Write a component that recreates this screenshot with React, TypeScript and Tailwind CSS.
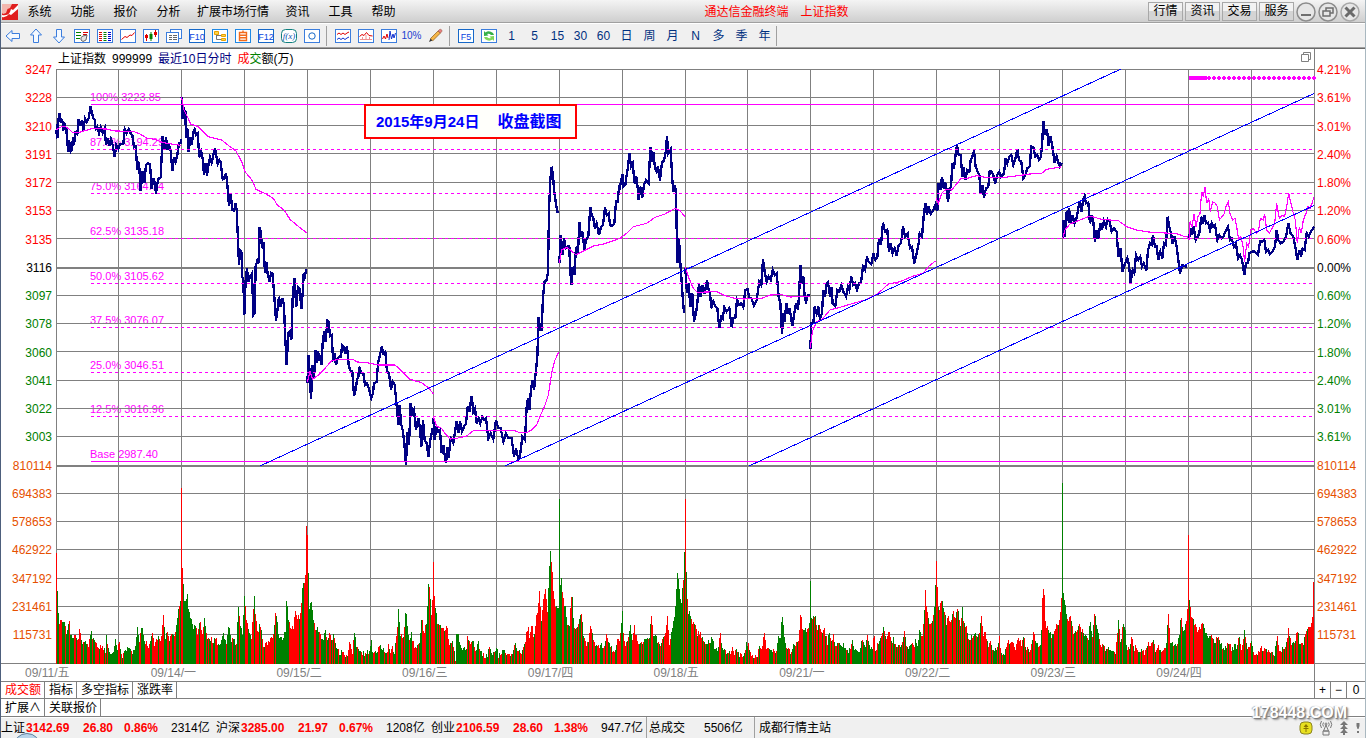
import React from "react";

/* ---------- market data ---------- */

const LEFT_AXIS = ["3247", "3228", "3210", "3191", "3172", "3153", "3135", "3116", "3097", "3078", "3060", "3041", "3022", "3003"];
const RIGHT_AXIS = ["4.21%", "3.61%", "3.01%", "2.40%", "1.80%", "1.20%", "0.60%", "0.00%", "0.60%", "1.20%", "1.80%", "2.40%", "3.01%", "3.61%"];
const VOLUME_AXIS = ["810114", "694383", "578653", "462922", "347192", "231461", "115731"];
const DATES = ["09/11/五", "09/14/一", "09/15/二", "09/16/三", "09/17/四", "09/18/五", "09/21/一", "09/22/二", "09/23/三", "09/24/四"];

const H_LINES = [69, 97, 125, 153, 182, 210, 238, 295, 323, 351, 380, 408, 436, 493, 521, 549, 578, 606, 634];
const V_LINES = [56, 118, 181, 244, 307, 370, 433, 496, 559, 622, 685, 747, 810, 873, 936, 999, 1062, 1125, 1188, 1251];

const LEVELS = [
  { y: 104, text: "100% 3223.85", solid: true },
  { y: 149, text: "87.5% 3194.29", solid: false },
  { y: 193, text: "75.0% 3164.74", solid: false },
  { y: 238, text: "62.5% 3135.18", solid: false },
  { y: 283, text: "50.0% 3105.62", solid: false },
  { y: 327, text: "37.5% 3076.07", solid: false },
  { y: 372, text: "25.0% 3046.51", solid: false },
  { y: 416, text: "12.5% 3016.96", solid: false },
  { y: 461, text: "Base 2987.40", solid: true },
];

type Trace = { at: string; price: string[]; average: string[] };

/* Coordinates are thirds of a pixel, relative to each block's origin. */
const TRACES: Trace[] = [
  {
    at: "translate(0 50) scale(0.33333)",
    price: [
      "168,240 173,265 173,222 178,192 180,192 182,215 187,212 190,235 194,225 197,240 200,232 204,307 207,270 212,305 216,300 219,262 222,285 226,248 232,252 236,207 241,228 246,210 250,243 255,205 260,215 266,205 272,168 276,190 280,205 284,208 287,237 292,230 297,250 302,232 308,248 314,235 318,285 323,265 328,288 333,268 338,285 344,320 349,285 355,298 360,283 370,283 374,238 380,250 386,238 392,250 397,255 402,292 407,290 412,360 417,335 422,422 428,362 433,398 438,345 443,340 450,342 455,418 460,385 465,400 468,432 474,388 482,382 488,258 494,300 498,262 503,300 506,280 512,302 517,362 522,322 527,335 532,315 537,280 543,280 543,266",
      "545,142 547,208 550,170 552,205 556,180 558,265 562,235 566,305 571,262 575,285 580,245 584,238 588,255 593,250 598,322 604,305 608,325 612,375 617,340 621,378 626,340 630,322 635,338 640,315 645,295 649,318 653,342 658,330 662,335 668,388 673,385 678,370 682,405 687,468 692,432 697,480 702,482 707,460 710,480 714,570 717,645 720,600 724,605 727,680 730,690 733,795 737,690 741,655 745,695 750,680 756,670 760,795 764,790 767,650 772,632 776,640 779,532 783,550 786,595 790,575 795,670 799,635 803,672 809,695 813,668 817,670 822,725 828,812 833,775 837,740 842,770 847,745 852,765 855,850 860,945 865,850 869,845 874,870 878,745 883,685 889,770 894,710 899,715 904,778 908,730 911,675 915,680 918,658",
    ],
    average: [
      "168,240 180,232 192,228 205,235 218,248 235,248 255,242 275,236 320,237 345,243 400,244 420,252 440,264 465,268 490,278 515,282 543,286",
      "545,142 552,180 562,200 572,222 595,230 625,260 665,270 690,290 708,303 725,335 735,365 758,393 768,418 800,433 820,445 832,465 852,480 870,508 890,525 905,537 920,548",
    ],
  },
  {
    at: "translate(300 90) scale(0.33333)",
    price: [
      "22,880 26,795 30,870 33,928 38,825 42,865 47,780 51,820 55,790 60,800 64,825 69,745 73,725 77,755 82,692 86,695 90,738 95,735 99,805 104,795 108,825 113,805 118,800 123,800 126,765 131,770 135,785 141,768 146,825 150,840 157,845 162,918 167,900 171,870 175,860 178,830 184,850 190,850 195,885 200,880 205,890 209,905 214,925 219,910 222,880 230,875 234,820 239,800 245,770 250,790 256,785 261,845 267,850 273,900 278,875 284,885 289,935 295,1005 299,945 303,1000 308,1020 313,1060 318,1125 322,1025 327,1065 332,940 337,970 342,960 348,1020 355,985 360,1015 364,1070 369,990 374,1050 380,1060 385,1100 391,1050 397,1020 400,1025",
      "400,985 404,1050 409,1010 415,1025 420,1020 425,1090 430,1065 433,1090 438,1120 443,1070 446,1105 452,1045 460,1060 465,1025 470,995 475,1030 480,995 486,1025 492,1010 498,1000 503,950 508,965 515,918 520,965 525,955 530,1000 536,985 541,1000 547,980 553,990 558,985 565,1045 572,1030 580,1048 588,990 595,1015 602,1015 610,1055 618,1030 625,1045 635,1045 642,1100 648,1075 655,1108 660,1098 667,1040 675,1050 680,950 684,925 688,960 692,910 697,870 702,900 707,850 712,800 716,680 720,720 725,720 729,620 734,575 740,570 744,545 747,360 751,270 755,230 759,255 762,300 767,335 772,365 776,367",
      "778,520 782,435 787,495 792,445 797,475 803,470 808,470 810,530 814,585 818,530 823,555 828,470 834,490 838,395 843,440 848,425 853,480 858,450 865,440 871,350 875,375 880,385 885,415 890,400 897,435 903,410 909,405 915,352 920,375 926,370 930,405 936,408 943,400 948,335 953,335 958,285 960,290 967,253 970,290 976,285 980,255 984,230 988,190 993,230 998,220 1004,280 1010,260 1016,330 1021,290 1027,322 1032,285 1038,270 1046,280 1051,172 1055,215 1060,185 1065,235 1070,245 1074,228 1080,272 1086,218 1092,212 1098,180 1101,138 1105,190 1112,178 1117,270 1120,305 1124,285 1128,305 1132,520 1137,445 1141,520 1144,560 1148,620 1152,668",
    ],
    average: [
      "22,875 30,845 38,868 55,855 75,835 95,812 120,808 158,808 172,816 200,818 235,825 285,825 300,838 330,868 365,878 385,893 400,911",
      "400,980 410,1008 425,1015 435,1030 450,1047 470,1045 500,1038 520,1022 640,1021 660,1028 680,1028 695,1020 710,1005 722,975 735,945 745,915 755,850 765,810 776,787",
      "778,520 785,480 800,472 812,480 828,495 850,483 880,468 910,462 940,452 960,445 980,430 1000,410 1040,400 1065,382 1095,372 1125,355 1140,362 1156,382",
    ],
  },
  {
    at: "translate(600 90) scale(0.33333)",
    price: [
      "256,535 261,610 266,580 271,650 277,610 282,695 288,670 292,640 297,580 302,620 308,585 314,610 321,570 326,600 330,610 334,655 340,635 346,650 352,655 358,715 364,680 368,685 373,652 380,665 388,655 395,712 400,685 406,685 411,630 418,645 424,640 430,652 436,600 443,598 448,625 454,625 462,647 470,630 478,575 484,585 489,507 494,545 500,575 506,560 512,570 518,540 524,555 530,550 536,620 541,640 546,732 550,670 554,695 559,640 564,670 569,655 577,708 583,670 588,640 594,660 598,600 601,525 605,580 610,560 614,620 618,635 624,615 631,615",
      "631,778 634,700 640,700 644,650 650,670 655,650 660,688 666,670 670,600 675,620 680,580 684,577 690,620 694,590 698,640 706,648 712,600 718,605 724,585 730,605 738,620 744,590 748,600 754,560 760,585 765,580 771,600 777,580 783,578 789,530 795,540 801,500 806,515 814,522 820,490 826,510 832,500 837,445 843,465 849,398 855,425 862,420 867,485 872,460 878,490 884,475 890,497 896,465 903,460 909,410 915,440 923,430 930,475 936,470 943,520 950,490 956,460 959,430 966,440 971,380 976,340 981,375 986,350 992,372 1000,360 1006,345 1009,360",
    ],
    average: [
      "256,530 265,560 280,595 292,607 350,605 370,615 400,624 430,627 485,625 510,615 545,614 570,621 631,619",
      "631,775 637,725 650,695 665,690 690,660 720,652 760,640 795,630 835,610 865,582 900,575 940,558 970,550 985,530 1006,513",
    ],
  },
  {
    at: "translate(930 60) scale(0.33333)",
    price: [
      "18,450 22,450 26,370 31,390 36,350 41,385 46,368 50,390 54,425 59,385 63,380 67,310 72,325 76,290 81,255 86,285 92,285 97,350 101,320 106,360 112,330 118,335 122,300 127,290 132,272 137,320 143,335 148,345 152,400 157,375 162,412 168,385 175,380 179,335 185,335 190,345 196,370 202,345 208,335 213,350 222,340 227,295 232,310 238,290 244,285 250,315 255,300 262,268 267,300 274,305 280,355 286,345 292,325 299,320 304,260 310,262 316,290 322,285 327,300 333,290 337,240 340,182 345,225 351,208 356,258 362,230 368,265 374,308 380,290 386,310 390,320 395,308",
      "398,535 400,480 404,530 409,460 413,455 417,490 417,445 422,490 428,465 434,490 441,470 448,425 455,455 459,420 464,408 468,430 475,428 480,490 485,465 490,485 495,545 500,510 505,535 511,490 516,510 522,482 528,500 533,478 539,485 545,515 552,505 560,515 565,590 571,565 578,635 585,610 592,595 597,615 602,668 608,630 613,640 618,585 625,600 631,590 636,620 641,610 649,632 654,570 660,550 665,555 669,525 675,560 680,560 685,600 691,575 697,595 702,550 708,555 713,470 718,500 723,520 728,550 734,530 740,560 745,600 750,640 757,615 762,618 771,620",
      "777,540 781,505 786,525 791,500 797,540 803,530 808,520 814,470 818,490 823,465 828,490 834,488 840,510 845,490 850,500 855,495 862,540 868,525 874,535 880,530 888,510 894,500 900,540 905,535 912,560 918,550 924,595 930,585 936,600 943,645 948,610 954,610 958,580 966,575 974,575 984,585 990,545 998,545 1003,540 1008,575 1014,570 1020,582 1028,575 1035,560 1040,510 1045,540 1052,550 1060,545 1068,530 1075,490 1082,520 1090,530 1096,560 1102,600 1108,570 1113,590 1118,565 1124,570 1130,520 1136,530 1143,515 1152,500",
    ],
    average: [
      "18,415 25,430 35,400 48,388 65,390 92,357 115,354 140,347 165,352 225,352 265,347 300,342 335,340 350,328 393,321",
      "398,535 405,510 420,492 445,482 480,468 515,478 565,482 590,500 620,510 655,516 740,521 765,530 775,531",
      "777,540 780,485 786,500 792,462 798,500 804,470 810,460 815,395 820,410 825,382 830,430 836,415 841,455 848,425 856,430 862,440 868,480 876,470 882,462 888,440 895,425 900,460 908,480 915,475 920,500 926,540 932,530 938,550 944,605 950,550 956,560 962,510 970,505 980,520 986,510 991,475 1000,480 1004,462 1010,510 1018,520 1026,505 1034,490 1040,430 1048,475 1056,465 1064,470 1070,440 1076,400 1083,430 1090,460 1096,480 1102,550 1108,500 1114,520 1120,480 1128,460 1134,440 1140,445 1146,430 1152,410",
    ],
  },
];

/* Turnover envelope for each half of the period. */
const VOLUME_A =
  "128,310 130,460 134,515 138,505 145,515 150,540 157,515 160,555 168,550 175,570 180,532 184,565 192,575 200,578 206,530 210,565 216,570 225,585 240,595 241,545 246,597 255,600 262,565 266,600 270,560 274,612 282,605 292,582 298,600 306,592 312,520 316,580 321,515 326,560 332,575 338,585 345,550 350,580 360,545 364,575 370,490 375,560 380,535 384,570 390,540 398,545 402,495 406,465 410,440 414,345 418,440 422,450 424,410 428,480 434,500 438,540 443,515 448,550 453,500 458,550 463,500 468,550 475,560 484,565 488,548 494,578 500,580 507,550 514,580 519,505 524,570 530,560 536,578 541,462 546,520 550,540 555,415 558,505 564,530 570,570 574,485 577,420 580,490 584,540 590,520 598,580 606,570 614,565 620,555 626,475 632,550 640,560 648,540 650,445 655,500 660,530 666,530 670,475 675,495 680,500 685,435 688,390 692,400 695,310 697,228 699,305 702,470 707,455 710,490 716,540 722,530 728,550 734,565 738,540 744,560 748,535 752,570 757,545 762,585 770,605 780,597 785,608 790,605 794,570 800,600 805,530 810,590 820,600 826,608 832,597 838,612 842,560 846,597 855,608 862,575 866,590 876,605 882,582 886,600 890,575 895,605 900,560 905,465 909,550 914,560 917,545 921,465 926,535 930,565 934,540 938,575 944,585 952,580 958,495 962,550 968,515 973,395 978,440 980,500 983,395 987,450 992,500 996,530 1000,520 1004,525 1010,550 1015,520 1019,575 1026,565 1030,580 1034,625 1036,545 1040,540 1044,575 1050,590 1058,590 1062,555 1068,580 1074,570 1080,600 1086,570 1090,600 1100,612 1108,610 1111,575 1115,605 1124,605 1128,575 1132,612 1142,597 1150,600 1156,610 1165,605 1169,570 1174,605 1182,600 1190,590 1195,545 1199,520 1203,560 1208,500 1212,560 1217,505 1222,465 1225,415 1229,510 1235,435 1239,400 1243,490 1246,375 1250,300 1254,360 1258,435 1262,470 1268,465 1270,405 1275,385 1279,440 1284,470 1288,510 1293,525 1297,435 1299,420 1303,520 1310,540 1316,500 1320,485 1326,560 1330,575 1336,570 1340,515 1345,550 1350,575 1358,590 1365,580 1372,585 1377,555 1383,580 1390,590 1396,600 1402,560 1406,565 1410,530 1414,460 1416,545 1420,580 1426,570 1431,515 1436,560 1441,525 1448,575 1455,575 1460,570 1467,550 1474,575 1479,480 1484,545 1490,550 1496,580 1504,570 1512,530 1516,490 1520,575 1526,530 1531,495 1535,440 1539,355 1543,420 1547,460 1552,380 1555,290";
const VOLUME_B =
  "12,300 14,360 17,480 22,478 26,510 32,508 38,545 45,540 52,565 58,580 64,565 68,580 72,550 78,590 86,598 91,545 95,585 102,600 110,612 118,590 124,605 130,590 136,610 145,608 150,580 154,575 160,605 166,612 175,612 182,575 186,600 191,535 196,580 202,600 212,595 220,595 225,540 229,570 232,478 237,550 244,590 254,600 260,580 270,575 275,472 279,540 284,530 290,540 296,500 300,500 304,485 308,490 313,530 317,525 322,550 330,535 336,570 341,540 346,580 350,550 355,582 362,570 368,575 378,590 386,597 392,568 398,597 410,600 417,550 422,595 428,550 433,590 440,590 442,530 446,595 455,560 460,550 465,520 470,565 477,540 483,575 487,560 492,585 500,578 508,575 512,530 516,580 522,585 528,570 535,580 537,560 543,580 547,525 552,560 556,510 560,422 564,480 568,515 574,520 580,485 584,365 586,333 588,445 592,480 595,450 600,455 604,490 608,510 613,490 618,520 623,475 628,495 634,462 640,530 644,465 648,520 654,515 658,560 668,550 676,545 682,550 688,490 692,550 698,545 704,580 708,560 714,590 722,598 729,550 733,600 742,600 748,565 754,580 760,575 766,590 772,560 780,575 785,550 790,590 800,595 807,535 814,575 824,585 827,450 831,402 834,510 840,530 848,555 855,530 862,520 868,495 872,415 877,428 881,480 886,510 892,490 898,540 906,535 913,520 920,540 926,550 932,570 936,505 942,560 947,470 953,535 958,565 965,585 972,590 980,595 988,590 995,600 1002,495 1006,575 1011,515 1017,530 1020,595 1026,590 1032,550 1036,590 1042,582 1050,600 1056,590 1062,605 1070,570 1076,580 1080,565 1086,600 1092,580 1100,600 1110,585 1115,485 1120,570 1126,575 1134,575 1140,550 1144,495 1149,540 1155,520 1158,480 1160,442 1164,450 1168,490 1176,520 1183,545 1192,510 1198,535 1206,565 1213,555 1220,570 1230,555 1236,580 1246,590 1254,575 1262,595 1268,570 1272,595 1277,550 1282,590 1290,535 1296,600 1305,560 1310,610 1320,605 1327,580 1333,595 1340,590 1350,600 1358,605 1364,545 1369,600 1378,590 1384,585 1390,530 1396,580 1404,575 1411,530 1416,580 1424,570 1430,545 1435,520 1441,520 1446,490 1450,397";

/* Opening spikes: x, top, colour. */
const SPIKES: [number, number, "r" | "g"][] = [
  [56, 553, "r"], [181, 488, "r"], [306, 526, "r"], [433, 562, "r"], [559, 499, "g"], [685, 499, "r"],
  [810, 581, "g"], [936, 561, "r"], [1062, 483, "g"], [1188, 535, "r"], [1313, 582, "r"],
];

/* Share of falling (green) minutes up to each x. */
const GREEN_SHARE: [number, number][] = [
  [70, 0.65], [103, 0.3], [132, 0.6], [180, 0.45], [192, 0.85], [215, 0.4], [251, 0.65], [273, 0.4], [290, 0.65], [307, 0.15],
  [323, 0.75], [352, 0.45], [372, 0.7], [392, 0.5], [407, 0.7], [424, 0.4], [440, 0.7], [455, 0.35], [497, 0.6], [523, 0.4],
  [555, 0.1], [572, 0.7], [592, 0.4], [616, 0.65], [634, 0.5], [651, 0.35], [660, 0.75], [671, 0.3], [686, 0.85], [700, 0.35],
  [724, 0.6], [768, 0.3], [794, 0.7], [802, 0.2], [811, 0.8], [829, 0.35], [872, 0.65], [890, 0.35], [920, 0.6], [938, 0.2],
  [964, 0.6], [995, 0.35], [1004, 0.65], [1021, 0.35], [1041, 0.6], [1044, 0.05], [1056, 0.6], [1062, 0.4], [1066, 0.8], [1082, 0.35],
  [1117, 0.65], [1139, 0.5], [1167, 0.4], [1187, 0.6], [1203, 0.3], [1244, 0.65], [1271, 0.35], [1280, 0.6], [1292, 0.4], [1303, 0.7], [1315, 0.1],
];

function hash(n: number) {
  let h = Math.imul(n + 1, 0x9e3779b1);
  h = Math.imul(h ^ (h >>> 15), 0x85ebca6b);
  h = Math.imul(h ^ (h >>> 13), 0xc2b2ae35);
  return ((h ^ (h >>> 16)) >>> 0) / 4294967296;
}

function envelope(source: string, origin: number, scale: number) {
  return source.split(" ").map((pair) => {
    const [x, y] = pair.split(",").map(Number);
    return [origin + x / scale, 450 + y / 3];
  });
}

function buildVolume() {
  const pts = [...envelope(VOLUME_A, 0, 2.2725), ...envelope(VOLUME_B, 680, 2.2857)];
  let red = "";
  let green = "";
  let seg = 0;
  for (let x = 57; x < 1314; x++) {
    while (seg < pts.length - 2 && pts[seg + 1][0] < x) seg++;
    const [x0, y0] = pts[seg];
    const [x1, y1] = pts[seg + 1];
    const t = Math.min(1, Math.max(0, (x - x0) / (x1 - x0 || 1)));
    const top = Math.min(661, Math.round(y0 + (y1 - y0) * t + hash(x) * 6 - 1));
    const share = (GREEN_SHARE.find(([end]) => x <= end) ?? [0, 0.5])[1];
    const bar = `M${x} ${top}h1V664h-1z`;
    if (hash(x + 5000) < share) green += bar;
    else red += bar;
  }
  return { red, green };
}

const VOLUME = buildVolume();

/* ---------- toolbar icons ---------- */

const svgProps = { viewBox: "0 0 16 16", width: 16, height: 16, fill: "none", "aria-hidden": true } as const;

function Boxed({ children, tone = "#3b7ddd" }: { children: React.ReactNode; tone?: string }) {
  return (
    <svg {...svgProps}>
      <rect x="0.5" y="1.5" width="15" height="13" fill="#fff" stroke={tone} />
      {children}
    </svg>
  );
}

function Arrow({ turn }: { turn: number }) {
  return (
    <svg {...svgProps}>
      <path transform={`rotate(${turn} 8 8)`} d="M1 8 7 2.5V5.5H14.5V10.5H7V13.5Z" fill="#f4f9ff" stroke="#3b7ddd" strokeLinejoin="round" />
    </svg>
  );
}

function Letters({ text, tone = "#1668c8" }: { text: string; tone?: string }) {
  return (
    <Boxed tone={tone}>
      <text x="8" y="12" textAnchor="middle" fontSize="9" fill="#0b46e0" fontFamily="Liberation Sans, sans-serif">{text}</text>
    </Boxed>
  );
}

const TOOLS_A: [string, React.ReactNode][] = [
  ["后退", <Arrow turn={0} />],
  ["上一个", <Arrow turn={90} />],
  ["下一个", <Arrow turn={-90} />],
  ["自选报价", <Boxed><path d="M2 4.5h5M2 7.5h5M2 10.5h4" stroke="#008000" /><path d="M9 4.5h5M9 6.5h4" stroke="#d00" /><path d="M7 12q-1-3 2-4l4-1-1 5-3 1.5z" fill="#e4e4e4" stroke="#666" /></Boxed>],
  ["行情列表", <Boxed><path d="M2 4.5h3M2 6.5h3M2 8.5h3M2 10.5h3M2 12.5h3" stroke="#e00000" /><path d="M6.5 4.5h3M6.5 6.5h3M6.5 8.5h3M6.5 10.5h3M6.5 12.5h3" stroke="#008000" /><path d="M11 4.5h3M11 6.5h3M11 8.5h3M11 10.5h3M11 12.5h3" stroke="#0000d0" /></Boxed>],
  ["分时走势", <Boxed><path d="M1.5 11.5 5 8.5l2 1 3-2.5 2 .5 2.5-3" stroke="#e00000" /></Boxed>],
  ["K线图", <Boxed><path d="M3.5 6v7M12.5 2v7" stroke="#e00000" /><path d="M8 4v9" stroke="#008000" /><path d="M2 7h3v3H2zM11 4h3v3h-3z" fill="#e00000" /><path d="M6.5 6h3v5h-3z" fill="#008000" /></Boxed>],
  ["多窗口", <svg {...svgProps}><rect x="4.5" y="1.5" width="11" height="9" fill="#fff" stroke="#3b7ddd" /><rect x="0.5" y="4.5" width="12" height="10" fill="#fff" stroke="#3b7ddd" /><path d="M3 7.5h3M7 7.5h4M3 9.5h3M7 9.5h4M3 11.5h3M7 11.5h4" stroke="#666" /></svg>],
  ["F10资料", <Letters text="F10" />],
  ["板块树", <Boxed tone="#1e88e5"><path d="M4.5 5v6.5H9M4.5 7.5H9" stroke="#777" /><path d="M2.5 3.5h4v3h-4zM9.5 6.5h4v2h-4zM9.5 10.5h4v2h-4z" fill="#ffd54a" stroke="#e8a200" /></Boxed>],
  ["自选股", <Boxed tone="#1e88e5"><path d="M4.5 4.5h7v8h-7zM4.5 7.2h7M4.5 9.8h7M8 2.5v2" stroke="#f26a1b" strokeWidth="1.4" /></Boxed>],
  ["F12交易", <Letters text="F12" />],
  ["公式", <svg {...svgProps}><rect x="0.5" y="1.5" width="15" height="13" rx="4" fill="#fff" stroke="#0f7f7f" /><text x="8" y="11" textAnchor="middle" fontSize="9" fontStyle="italic" fill="#0a50b0" fontFamily="Liberation Serif, serif">f(x)</text></svg>],
  ["选股", <Boxed><circle cx="8" cy="8" r="3.2" stroke="#1668c8" /></Boxed>],
];

const TOOLS_B: [string, React.ReactNode][] = [
  ["叠加走势", <Boxed><path d="M2 6.5 4 5l2 1.5L8 5l2 1.5L12 5l2-1" stroke="#e00000" /><path d="M2 11.5 4 10l2 1.5L8 10l2 1.5L12 10l2-1" stroke="#1030d0" /></Boxed>],
  ["区间统计", <Boxed><path d="M1.5 8.5 4 6.5l2 1 2.5-3 2.5 3 3.5.5" stroke="#e00000" /><path d="M2 11.5h12M4.5 9v2M8 7v4M11.5 9v2" stroke="#f09090" /></Boxed>],
  ["振荡指标", <Boxed><path d="M1.5 11 3 8l1.5 3L6 6l1 4" stroke="#e00000" /><path d="M8 12 9 3l1.5 8L12 6l1 4 1.5-5" stroke="#1030d0" /></Boxed>],
  ["百分比坐标", <span className="text-[10px] text-[#2040d0]">10%</span>],
  ["画线工具", <svg {...svgProps}><path d="M2 14 3.5 10.5 5.5 12.5z" fill="#333" /><path d="M3.5 10.5 11 3l2.5 2L5.8 12.7z" fill="#f5b548" stroke="#8a5a18" strokeWidth="0.7" /><path d="M11 3l1.5-1.5q1.2-.5 2 .3t.3 1.7L13.5 5z" fill="#e98080" stroke="#8a4a38" strokeWidth="0.5" /></svg>],
];

const TOOLS_C: [string, React.ReactNode][] = [
  ["F5切换", <Letters text="F5" />],
  ["刷新", <Boxed><path d="M3 8V3l1.5 1.5Q8 2 12 5l1 2h-3Q8 5 6 6l1.5 1.5z" fill="#35b048" /><path d="M13 8v5l-1.5-1.5Q8 14 4 11L3 9h3q2 2 4 1L8.5 8.5z" fill="#7fd85a" /></Boxed>],
];

const PERIODS = ["1", "5", "15", "30", "60", "日", "周", "月", "N", "多", "季", "年"];

function ToolGroup({ items }: { items: [string, React.ReactNode][] }) {
  return (
    <>
      {items.map(([label, icon]) => (
        <button key={label} type="button" aria-label={label} className="flex h-6 w-[23px] shrink-0 items-center justify-center">
          {icon}
        </button>
      ))}
    </>
  );
}

function ToolSeparator({ className = "" }: { className?: string }) {
  return <span className={`h-5 w-px shrink-0 bg-[#a0a0a0] ${className}`} />;
}

/* ---------- page parts ---------- */

const MENUS = ["系统", "功能", "报价", "分析", "扩展市场行情", "资讯", "工具", "帮助"];

function MenuBar() {
  return (
    <header className="flex h-6 items-center border-b border-white bg-gradient-to-b from-[#f4f4f4] to-[#cdcdcd] pr-[5px] shadow-[inset_0_-1px_0_#a0a0a0]">
      <svg viewBox="0 0 16 16" width="16" height="16" className="ml-px shrink-0" aria-hidden="true">
        <rect width="16" height="16" fill="#e01f1f" />
        <path d="M0 0h10L8 4 5.5 5 4 9 1 10 0 9z" fill="#f3b6ae" />
        <path d="M0 11q6 1 8-3l1-3 2 1 5-5v4L9 11l-2-1q-3 4-7 3z" fill="#fff" />
      </svg>
      <nav className="flex">
        {MENUS.map((m) => (
          <button key={m} type="button" className="min-w-[43px] shrink-0 px-[7px] whitespace-nowrap">{m}</button>
        ))}
      </nav>
      <h1 className="flex flex-1 justify-center gap-3 whitespace-nowrap text-[#f00]">
        <span>通达信金融终端</span>
        <span>上证指数</span>
      </h1>
      <div className="flex gap-0.5">
        {["行情", "资讯", "交易", "服务"].map((t) => (
          <button key={t} type="button" className="h-[19px] w-[35px] border border-[#a8a8a8] bg-gradient-to-b from-[#f2f2f2] from-50% to-[#d4d4d4] to-50% leading-4">{t}</button>
        ))}
        <button type="button" aria-label="最小化" className="h-5 w-5">
          <svg viewBox="0 0 20 20" aria-hidden="true"><circle cx="10" cy="10" r="9" fill="#e6e6e6" stroke="#8c8c8c" strokeWidth="1.5" /><path d="M5 13h10" stroke="#6e6e6e" strokeWidth="2" /></svg>
        </button>
        <button type="button" aria-label="还原" className="h-5 w-5">
          <svg viewBox="0 0 20 20" fill="none" aria-hidden="true"><circle cx="10" cy="10" r="9" fill="#e6e6e6" stroke="#8c8c8c" strokeWidth="1.5" /><path d="M8 9V6h7v5h-3M5 9h7v5H5z" stroke="#6e6e6e" strokeWidth="1.5" /></svg>
        </button>
        <button type="button" aria-label="关闭" className="h-5 w-5">
          <svg viewBox="0 0 20 20" aria-hidden="true"><circle cx="10" cy="10" r="9" fill="#e6e6e6" stroke="#a8a8a8" strokeWidth="1.5" /><path d="M5.5 5.5l9 9M14.5 5.5l-9 9" stroke="#6a6a6a" strokeWidth="3" /></svg>
        </button>
      </div>
    </header>
  );
}

function Toolbar() {
  return (
    <div role="toolbar" className="flex h-[25px] items-center border-b border-[#696969] bg-[#f0f0f0] shadow-[inset_0_-1px_0_#a0a0a0]">
      <ToolGroup items={TOOLS_A} />
      <ToolSeparator className="mr-1 ml-[3px]" />
      <ToolGroup items={TOOLS_B} />
      <ToolSeparator className="mr-1 ml-[3px]" />
      <ToolGroup items={TOOLS_C} />
      {PERIODS.map((p) => (
        <button key={p} type="button" className="h-6 w-[23px] shrink-0 text-[#003080]">{p}</button>
      ))}
      <ToolSeparator />
    </div>
  );
}

function axisTone(i: number) {
  if (i < 7) return "text-[#f00]";
  return i === 7 ? "text-black" : "text-[#008000]";
}

function Axis({ values, side }: { values: string[]; side: "left" | "right" }) {
  return (
    <ul className={`-mt-2 flex h-[581px] shrink-0 flex-col justify-between ${side === "left" ? "w-[55px] pr-1 text-right" : "w-[50px] pl-0.5 text-left"}`}>
      {values.map((v, i) => (
        <li key={i} className={`h-4 leading-[18px] ${axisTone(i)}`}>{v}</li>
      ))}
      {VOLUME_AXIS.map((v) => (
        <li key={v} className="h-4 leading-[18px] text-[#e65000]">{v}</li>
      ))}
    </ul>
  );
}

function Plot() {
  return (
    <div className="relative min-w-0 flex-1">
      {LEVELS.map((l) => (
        <span key={l.text} className="absolute left-[34px] text-[11px] leading-3 whitespace-nowrap text-[#f0f]" style={{ top: l.y - 69 - 13 }}>{l.text}</span>
      ))}
      <svg viewBox="56 69 1258 594" preserveAspectRatio="none" className="relative block h-[594px] w-full overflow-visible" fill="none" shapeRendering="crispEdges" role="img" aria-label="上证指数最近10日分时">
        <g fill="#808080">
          {H_LINES.map((y) => <rect key={y} x="56" y={y} width="1258" height="1" />)}
          <rect x="56" y="267" width="1258" height="2" />
          <rect x="56" y="465" width="1258" height="2" />
          {V_LINES.map((x) => <rect key={x} x={x} y="69" width="1" height="594" />)}
        </g>
        <path d={VOLUME.red} fill="#f00" />
        <path d={VOLUME.green} fill="#008000" />
        {SPIKES.map(([x, top, tone]) => (
          <rect key={x} x={x} y={top} width="1" height={664 - top} fill={tone === "r" ? "#f00" : "#008000"} />
        ))}
        {TRACES.map((t) => (
          <g key={t.at} transform={t.at} stroke="#000084" strokeWidth="7">
            {t.price.map((p) => <polyline key={p} points={p} />)}
          </g>
        ))}
        {TRACES.map((t) => (
          <g key={t.at} transform={t.at} stroke="#f0f" strokeWidth="3.5">
            {t.average.map((p) => <polyline key={p} points={p} />)}
          </g>
        ))}
        <g stroke="#f0f">
          {LEVELS.map((l) => (
            <path key={l.y} d={`M91 ${l.y + 0.5}H1314`} strokeDasharray={l.solid ? undefined : "3 3"} />
          ))}
          <path d="M1189 78H1207" strokeWidth="4" />
          <path d="M1207 78H1317" strokeWidth="2" strokeDasharray="4 1" />
          <path d="M1208 76.5H1317M1208 79.5H1317" strokeDasharray="2 3" />
        </g>
        <path d="M260 466 1121 69M505 466 1314 93.5M749 466 1314 205.5" stroke="#00f" strokeWidth="1" />
      </svg>
      <p className="absolute top-[35px] left-[308px] flex h-[35px] w-[213px] items-center gap-[18px] border-2 border-[#f00] bg-[#fffffb] pl-[10px] text-[15px] font-bold whitespace-nowrap text-[#00f]">
        <span>2015年9月24日</span>
        <span className="text-base">收盘截图</span>
      </p>
    </div>
  );
}

function ChartPanel() {
  return (
    <main className="bg-white">
      <div className="flex h-5">
        <p className="flex flex-1 items-center gap-[6px] pl-[57px] whitespace-nowrap">
          <span>上证指数</span>
          <span>999999</span>
          <span className="text-[#000080]">最近10日分时</span>
          <span><span className="text-[#f00]">成</span><span className="text-[#008000]">交</span>额(万)</span>
        </p>
        <button type="button" aria-label="还原图表" className="mt-0.5 mr-0.5 h-3 w-3">
          <svg viewBox="0 0 12 12" fill="none" stroke="#808080" aria-hidden="true"><path d="M3.5 3V1.5h7v7H8.5M1.5 3.5h7v7h-7z" /></svg>
        </button>
        <div className="w-[51px] border-l border-[#808080]" />
      </div>
      <div className="flex">
        <Axis values={LEFT_AXIS} side="left" />
        <Plot />
        <div className="w-[51px] shrink-0 border-l border-[#808080]">
          <Axis values={RIGHT_AXIS} side="right" />
        </div>
      </div>
      <div className="flex h-[18px] border-t border-[#808080] text-[#808080]">
        <ol className="mr-8 ml-6 grid flex-1 grid-cols-10">
          {DATES.map((d) => <li key={d} className="leading-[18px] whitespace-nowrap">{d}</li>)}
        </ol>
        <div className="w-[51px] border-l border-[#808080]" />
      </div>
    </main>
  );
}

function IndicatorTabs() {
  const cell = "h-full border-r border-[#808080] pr-[3px] pl-1 leading-4 whitespace-nowrap";
  return (
    <>
      <div className="flex h-[17px] border-t border-[#808080] bg-white">
        <button type="button" className={`${cell} text-[#f00]`}>成交额</button>
        {["指标", "多空指标", "涨跌率"].map((t) => <button key={t} type="button" className={cell}>{t}</button>)}
        <div className="ml-auto flex">
          <button type="button" aria-label="放大" className="w-4 border-l border-[#808080] leading-4">+</button>
          <button type="button" aria-label="缩小" className="w-4 border-l border-[#808080] leading-4">−</button>
          <button type="button" className="w-[19px] border-l border-[#808080] leading-4">0</button>
        </div>
      </div>
      <div className="flex h-[18px] border-t border-[#808080] bg-white">
        <button type="button" className={`${cell} w-11`}>扩展∧</button>
        <button type="button" className={cell}>关联报价</button>
      </div>
    </>
  );
}

const INDEXES = [
  { name: "上证", price: "3142.69", change: "26.80", pct: "0.86%", amount: "2314亿" },
  { name: "沪深", price: "3285.00", change: "21.97", pct: "0.67%", amount: "1208亿" },
  { name: "创业", price: "2106.59", change: "28.60", pct: "1.38%", amount: "947.7亿" },
];

function StatusBar() {
  return (
    <footer className="relative flex h-[22px] items-center overflow-hidden border-t border-[#808080] bg-[#f0f0f0] whitespace-nowrap shadow-[inset_0_1px_0_#fff]">
      <span className="absolute top-4 left-3 h-7 w-7 rounded-full border border-[#5d7f9c] bg-[#b8d4ea]" />
      {INDEXES.map((x) => (
        <p key={x.name} className="relative grid w-[215px] shrink-0 grid-cols-[25px_57px_41px_47px_45px]">
          <span>{x.name}</span>
          <b className="text-[#f00]">{x.price}</b>
          <b className="text-[#f00]">{x.change}</b>
          <b className="text-[#f00]">{x.pct}</b>
          <span>{x.amount}</span>
        </p>
      ))}
      <p className="flex h-full w-[108px] items-center gap-[19px] border-l border-[#a0a0a0] pl-0.5">
        <span>总成交</span>
        <span>5506亿</span>
      </p>
      <p className="flex h-full items-center border-l border-[#a0a0a0] pl-1">成都行情主站</p>
      <div className="ml-auto flex items-center gap-[6px] pr-1">
        <svg viewBox="0 0 14 14" width="14" height="14" aria-hidden="true"><rect x="1" y="1" width="12" height="12" rx="4" fill="#e8e020" stroke="#8a8420" /><path d="M7 3l2.5 3h-2v1h2v1h-2v3h-1V8h-2V7h2V6h-2z" fill="#8a7400" /></svg>
        <svg viewBox="0 0 14 16" width="14" height="16" fill="none" stroke="#777" aria-hidden="true"><path d="M7 5l-2.5 6h5L7 5zM4 11h6v4H4zM4.5 2.5q-1.5 2 0 4M9.5 2.5q1.5 2 0 4M2.5 1q-2.5 3.5 0 7M11.5 1q2.5 3.5 0 7" /><circle cx="7" cy="4" r="1" /></svg>
        <svg viewBox="0 0 10 14" width="10" height="14" fill="#777" aria-hidden="true"><path d="M5 0l4 4H6v1l3 3H6v1l3 3H6v2H4v-2H1l3-3V8H1l3-3V4H1z" /></svg>
        <svg viewBox="0 0 6 12" width="6" height="12" fill="#777" aria-hidden="true"><path d="M1.5 1h3v3l-1 3h-1l-1-3zM2 9h2v2H2z" /></svg>
      </div>
    </footer>
  );
}

export default function App() {
  return (
    <div className="relative flex min-h-screen flex-col overflow-hidden border-r border-l border-r-[#a9b8c0] border-l-[#4d5f7c] bg-[#f0f0f0] font-['Liberation_Sans','Noto_Sans_CJK_SC',sans-serif] text-xs text-black">
      <MenuBar />
      <Toolbar />
      <ChartPanel />
      <IndicatorTabs />
      <StatusBar />
      <span className="pointer-events-none absolute right-[18px] bottom-[13px] text-base leading-6 font-bold text-white [text-shadow:1px_1px_1px_#777,-1px_0_1px_#aaa,2px_2px_2px_#999]">178448.COM</span>
    </div>
  );
}
